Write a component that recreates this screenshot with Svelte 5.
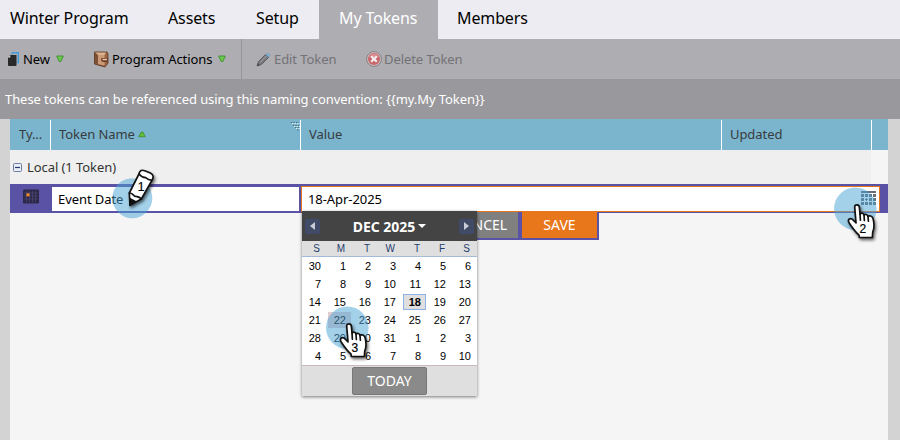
<script>
  const tabs = [
    { label: 'Winter Program', width: 138, pad: 10 },
    { label: 'Assets', width: 89, pad: 30 },
    { label: 'Setup', width: 92, pad: 29 },
    { label: 'My Tokens', width: 119, pad: 20, active: true },
    { label: 'Members', width: 120, pad: 19 }
  ];
  const weekdays = ['S', 'M', 'T', 'W', 'T', 'F', 'S'];
  const days = [
    30, ...Array.from({ length: 31 }, (_, i) => i + 1),
    ...Array.from({ length: 10 }, (_, i) => i + 1)
  ];
  const hands = [
    { n: 2, x: 834, y: 188 },
    { n: 3, x: 326, y: 306.5 }
  ];
</script>

<div class="app">
  <nav class="tabs">
    {#each tabs as t}
      <div class="tab" class:active={t.active} style="width:{t.width}px;padding-left:{t.pad}px">{t.label}</div>
    {/each}
  </nav>

  <div class="toolbar">
    <div class="tool new">
      <svg width="12" height="15" viewBox="0 0 12 15"><path d="M4 2.5V1.5Q4 .8 5 .8H10.3V10.5H9" fill="none" stroke="#3d9bdc" stroke-width="1.4" /><path d="M0 6 2 3H8.5V13Q8.5 14 7.5 14H1Q0 14 0 13Z" fill="#292929" /><path d="M0 5.5 2.3 3V5.5Z" fill="#ddd" /></svg>
      <span>New</span>
      <svg class="arrow" width="8" height="8" viewBox="0 0 8 8"><path d="M.7 1H7.3L4.8 6.5H3.2Z" fill="#6cc94c" stroke="#3a8f30" stroke-width=".9" /></svg>
    </div>
    <div class="tool actions">
      <svg width="15" height="17" viewBox="0 0 15 17"><path d="M.5 1H13L14 3V12L11 16 .5 13Z" fill="#9c6544" stroke="#54301c" stroke-width=".8" /><path d="M1 1.5H12L10.5 4H4Z" fill="#dab391" /><path d="M4 4H10.5V14.5L4 13Z" fill="#cb9a76" /><path d="M1 2 4 4V13L1.3 12.4Z" fill="#7c4e33" /><path d="M7.5 7H14V11H8.5Q6 9 7.5 7Z" fill="#6e3e25" /><path d="M8.5 8.5H13" stroke="#edcaab" stroke-width="1.4" /></svg>
      <span>Program Actions</span>
      <svg class="arrow" width="8" height="8" viewBox="0 0 8 8"><path d="M.7 1H7.3L4.8 6.5H3.2Z" fill="#6cc94c" stroke="#3a8f30" stroke-width=".9" /></svg>
    </div>
    <div class="tool edit">
      <svg width="15" height="15" viewBox="0 0 15 15"><path d="M1 14 2.5 9.5 9.5 2.5 12.5 5.5 5.5 12.5Z" fill="#77777a" stroke="#606063" /><path d="M4 10.5 10.5 4" stroke="#a9a9ac" /><path d="M1 14 2 11.2 3.8 13Z" fill="#48484b" /><path d="M10 2.5 11.5 1 14 3.5 12.5 5Z" fill="#7fb4d4" stroke="#6897b5" stroke-width=".7" /></svg>
      <span>Edit Token</span>
    </div>
    <div class="tool delete">
      <svg width="16" height="16" viewBox="0 0 16 16"><circle cx="8" cy="8" r="7.4" fill="#c7c2c4" stroke="#85777a" stroke-width=".9" /><circle cx="8" cy="8" r="6" fill="#c8676c" /><path d="M3 6Q8 -1 13 6Z" fill="#db8d91" /><path d="M5.2 5.2 10.8 10.8M10.8 5.2 5.2 10.8" stroke="#f3eeee" stroke-width="2.2" /></svg>
      <span>Delete Token</span>
    </div>
  </div>

  <div class="info">These tokens can be referenced using this naming convention: &#123;&#123;my.My Token&#125;&#125;</div>

  <main>
    <div class="grid">
      <div class="head">
        <div class="col type">Ty...</div>
        <div class="col name">Token Name
          <svg class="sort" width="8" height="7" viewBox="0 0 8 7"><path d="M3.2 1H4.8L7.3 5.7H.7Z" fill="#62bd38" stroke="#3d8b2b" stroke-width=".8" /></svg>
          <svg class="grip" width="9" height="9" viewBox="0 0 9 9"><path d="M0 .5H8M2 3.5H8M4 5.5H8M6 8H8" stroke="#4c6b79" stroke-dasharray="1.3 1.2" /><path d="M1 1.5H9M3 4.5H9M5 6.5H9" stroke="#e6f4fb" stroke-dasharray="1.3 1.2" /></svg>
        </div>
        <div class="col value">Value</div>
        <div class="col updated">Updated</div>
        <div class="rest"></div>
      </div>
      <div class="group">
        <div class="label">
          <svg width="9" height="9" viewBox="0 0 9 9"><rect x=".5" y=".5" width="8" height="8" rx="1" fill="#e9eef6" stroke="#6b7fa5" /><path d="M2 4.5H7" stroke="#223a70" stroke-width="1.2" /></svg>
          <span>Local (1 Token)</span>
        </div>
      </div>
      <div class="row">
        <div class="cell-icon">
          <svg width="16" height="15" viewBox="0 0 16 15"><rect width="16" height="14" y=".5" rx="1.3" fill="#2b2947" /><path d="M1 4H15M1 7H15M1 10H15M3.5 2V13.5M6.5 2V13.5M9.5 2V13.5M12.5 2V13.5" stroke="#514a7c" stroke-width=".6" /><rect x="3.5" y="4.3" width="3" height="3" fill="#f18a23" /></svg>
        </div>
        <div class="input name-input">Event Date</div>
        <div class="input value-input">
          <span>18-Apr-2025</span>
          <svg width="15" height="15" viewBox="0 0 15 15"><path d="M0 1H15" stroke="#686d78" stroke-width="2" /><path d="M0 4.5H15M0 8.5H15M0 12.5H15" stroke="#686d78" stroke-width="3" stroke-dasharray="3 1" /><path d="M4 8.5H7" stroke="#fff" stroke-width="3" /><path d="M4 8.5H7M5.5 7V10" stroke="#686d78" /></svg>
        </div>
      </div>
    </div>
  </main>

  <div class="editor-actions">
    <div class="btn cancel">CANCEL</div>
    <div class="btn save">SAVE</div>
  </div>

  <div class="calendar">
    <div class="cal-head">
      <div class="step"><svg width="5" height="8" viewBox="0 0 5 8"><path d="M5 0V8L0 4Z" fill="#c8ccd6" /></svg></div>
      <div class="month"><span>DEC 2025</span><i></i></div>
      <div class="step"><svg width="5" height="8" viewBox="0 0 5 8"><path d="M0 0V8L5 4Z" fill="#c8ccd6" /></svg></div>
    </div>
    <div class="week">
      {#each weekdays as d}<span>{d}</span>{/each}
    </div>
    <div class="days">
      {#each days as d, i}
        <div class="day" class:selected={i === 18} class:hovered={i === 22}>{d}</div>
      {/each}
    </div>
    <div class="cal-foot"><div class="today">TODAY</div></div>
  </div>

  <svg class="marker" style="left:112px;top:164px" width="50" height="60" viewBox="0 0 50 60">
    <circle class="halo" cx="20.3" cy="34.2" r="20" />
    <g class="shape" transform="translate(-12 -4) scale(.33333)">
      <path d="M90 136 88 99 117 42C119 31 126 29 134 32L151 39C160 43 161 51 157 59L124 117Z" />
      <path class="line" d="M117 42Q124 52 137 53 148 62 156 60M88 99Q94 99 99 104 104 110 111 110 119 111 124 117" />
      <path d="M90 136V116L107 125Z" style="fill:#111" />
    </g>
    <text x="29" y="27.2">1</text>
  </svg>

  {#each hands as h}
    <svg class="marker" style="left:{h.x}px;top:{h.y}px" width="52" height="62" viewBox="0 0 52 62">
      <circle class="halo" cx="21.3" cy="20.7" r="21.3" />
      <g class="shape" transform="translate(12.7 15.2) scale(.33333)">
        <path d="M24 12C24 3 37 3 38 12L40 34C42 28 51 29 52 36 54 32 63 33 64 40 67 36 77 38 79 46 83 62 83 76 78 87L77 103H38L37 96C26 86 16 72 8 60 0 48 12 42 19 50L28 59Z" />
        <path class="line" d="M40 34 41 51M52 36 53 52M64 40 65 54" />
      </g>
      <text x="28.9" y="44.9">{h.n}</text>
    </svg>
  {/each}
</div>

<style>
  :global(body) { margin: 0; }
  .app { position: relative; width: 900px; height: 440px; overflow: hidden; display: flex; flex-direction: column; background: #d3d3d3; font-family: "Noto Sans", "Open Sans", sans-serif; font-size: 13px; color: #000; }
  .app * { box-sizing: border-box; white-space: nowrap; }
  svg { display: block; flex: none; }
  .tabs { display: flex; height: 39px; background: #edecf2; flex: none; }
  .tab { font-size: 16px; line-height: 37px; letter-spacing: -.12px; }
  .tab.active { background: #aeadb2; color: #fff; }
  .toolbar { display: flex; height: 40px; background: #aeadb2; flex: none; line-height: 40px; letter-spacing: -.07px; }
  .tool { display: flex; align-items: center; }
  .new { width: 94px; padding-left: 8px; gap: 3px; }
  .actions { width: 148px; gap: 3px; border-right: 1px solid #96959a; }
  .new .arrow { margin-left: 3px; }
  .actions .arrow { margin-left: 3px; }
  .edit { width: 124px; padding-left: 14px; gap: 3px; color: #737276; }
  .delete { gap: 2px; color: #737276; }
  .info { height: 40px; flex: none; line-height: 41px; padding-left: 5px; color: #fff; background: #99989c; letter-spacing: -.07px; }
  main { flex: 1; padding: 0 12px 0 10px; background: #d3d3d3; }
  .grid { height: 321px; background: #f5f5f5; letter-spacing: -.07px; }
  .head { display: flex; height: 31px; padding-top: 1px; background: #7ab4cd; color: #383c3f; }
  .col { position: relative; display: flex; align-items: center; border-right: 1px solid #fff; padding: 0 0 2px 8px; }
  .type { width: 41px; padding-left: 9px; }
  .name { width: 250px; gap: 3px; }
  .value { width: 421px; }
  .updated { width: 150px; }
  .grip { position: absolute; right: 0; top: 2px; }
  .group { height: 34px; padding-right: 17px; }
  .label { display: flex; align-items: center; height: 34px; padding-left: 3px; gap: 5px; background: #efefef; color: #333; }
  .row { display: flex; height: 29px; background: #5a52a5; padding: 2px 8px 1px 0; }
  .cell-icon { width: 42px; padding: 3px 0 0 13px; }
  .input { background: #fff; display: flex; align-items: center; padding-left: 6px; }
  .name-input { width: 247px; height: 24px; margin: 1px 2px 0 0; }
  .value-input { flex: 1; border: 1px solid #e8761b; justify-content: space-between; padding: 0 3px 0 6px; }
  .value-input svg { margin-top: -1px; }
  .editor-actions { position: absolute; left: 442px; top: 212px; height: 28px; width: 157px; background: #5a52a5; display: flex; gap: 4px; padding: 0 2px 2px 2px; }
  .btn { color: #fff; font-size: 14px; line-height: 26px; text-align: center; }
  .cancel { width: 74px; background: #808080; }
  .save { flex: 1; background: #e8761b; }
  .calendar { position: absolute; left: 302px; top: 211px; width: 175px; height: 185px; background: #fff; box-shadow: 0 1px 3px rgba(0,0,0,.5); }
  .cal-head { display: flex; align-items: center; justify-content: space-between; height: 30px; padding: 0 3px 0 3px; background: #444; }
  .step { width: 15px; height: 15px; display: flex; align-items: center; justify-content: center; background: #414b66; border: 1px solid #3e4b6e; border-radius: 2px; }
  .month { display: flex; align-items: center; gap: 3px; color: #fff; font-weight: 700; font-size: 14px; letter-spacing: -.05px; }
  .month i { border: 4px solid transparent; border-top-color: #fff; border-bottom: 0; }
  .week { display: flex; height: 16px; background: #dfdfdf; border-bottom: 1px solid #a3bad9; font: 10px/15px "Liberation Sans", Arial, sans-serif; color: #233d6d; letter-spacing: 0; }
  .week span { width: 25px; padding-right: 7px; text-align: right; }
  .days { display: grid; grid-template-columns: repeat(7, 25px); grid-auto-rows: 18px; height: 108px; font: 11px/17px "Liberation Sans", Arial, sans-serif; }
  .day { text-align: right; padding: 1px 6px 0 0; }
  .day.selected { margin: 1px; padding: 0 4px 0 0; line-height: 14px; border: 1px solid #8db2e3; background: #dfdfdf; font-weight: 700; }
  .day.hovered { margin: 1px; padding: 0 5px 0 0; line-height: 16px; background: #e3cdd1; }
  .cal-foot { display: flex; justify-content: center; height: 31px; padding-top: 1px; background: #dfdfdf; border-top: 1px solid #cbb9be; }
  .today { width: 75px; height: 28px; border: 1px solid #777; border-radius: 2px; background: #8a8a8a; color: #fff; font-size: 14px; line-height: 26px; text-align: center; }
  .marker { position: absolute; overflow: visible; }
  .halo { fill: rgba(74,163,214,.5); }
  .shape { fill: #fff; stroke: #111; stroke-width: 5; stroke-linejoin: round; stroke-linecap: round; filter: drop-shadow(4px 6px 4px rgba(0,0,0,.6)); }
  .line { fill: none; }
  text { font: 12px "Liberation Sans", Arial, sans-serif; text-anchor: middle; fill: #000; stroke: #000; stroke-width: .2; }
</style>
